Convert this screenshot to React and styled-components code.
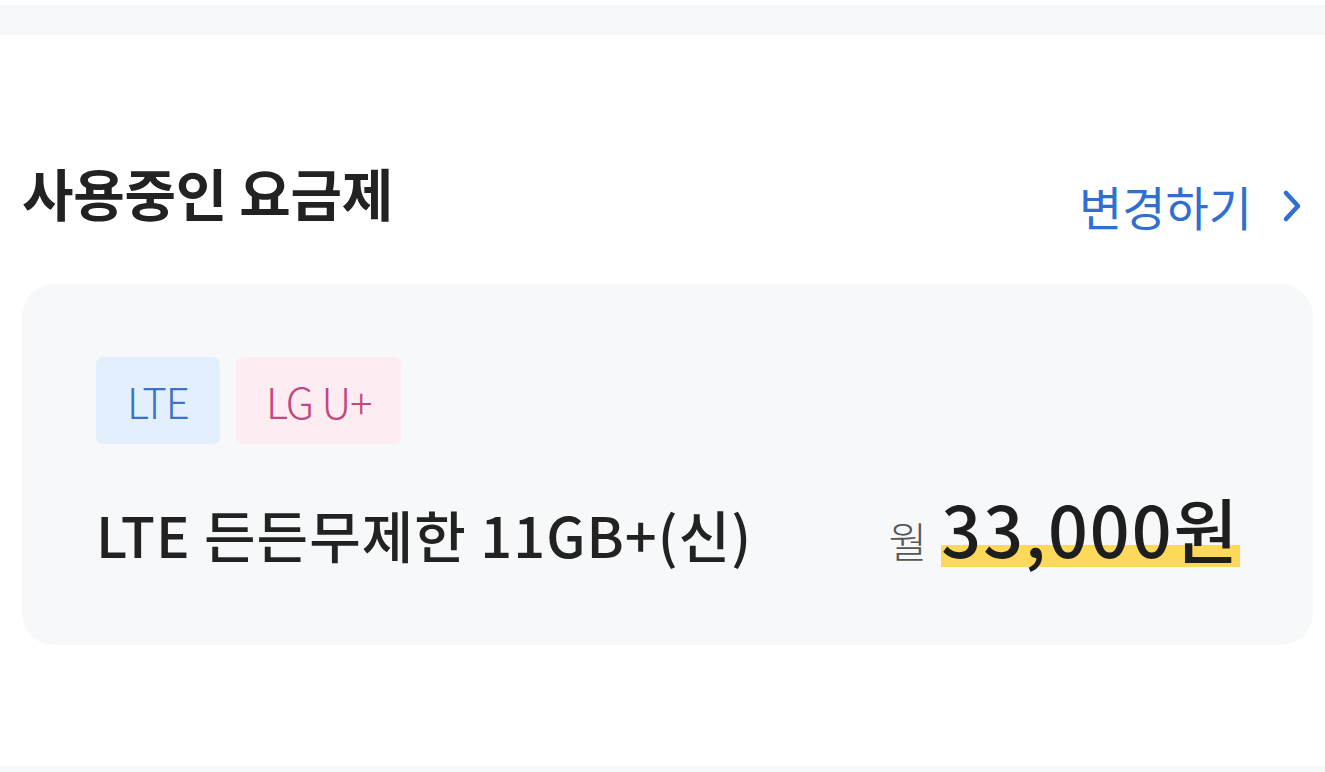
import React from 'react'
import styled, { createGlobalStyle } from 'styled-components'

const GlobalStyle = createGlobalStyle`
  html, body {
    margin: 0;
    padding: 0;
    background: #ffffff;
    font-family: "Noto Sans CJK KR", "Noto Sans", sans-serif;
  }
`;

const Band = styled.div`
  height: 30px;
  margin-top: ${p => p.$top || 0}px;
  background: #f7f8fa;
`;

const Section = styled.section`
  padding: 123px 12px 121px 22px;
`;

const Header = styled.div`
  display: flex;
  justify-content: space-between;
  align-items: flex-start;
`;

const Title = styled.h2`
  margin: 0;
  font-size: 56px;
  line-height: 1.2;
  font-weight: 600;
  color: #222222;
  letter-spacing: -0.3px;
`;

const ChangeLink = styled.a`
  display: flex;
  align-items: center;
  gap: 30px;
  margin-top: 20px;
  margin-right: 11px;
  font-size: 47px;
  line-height: 1.2;
  font-weight: 400;
  color: #2f6fd0;
  text-decoration: none;
`;

const Card = styled.div`
  margin-top: 50px;
  background: #f7f8fa;
  border-radius: 32px;
  padding: 73px 73px 71px 74px;
`;

const Tags = styled.div`
  display: flex;
  gap: 16px;
`;

const Tag = styled.span`
  display: inline-flex;
  align-items: center;
  height: 87px;
  padding: 0 ${p => p.$pad}px;
  border-radius: 7px;
  font-size: 42px;
  font-weight: 300;
  letter-spacing: -1px;
  color: ${p => p.$color};
  background: ${p => p.$bg};
`;

const PlanRow = styled.div`
  display: flex;
  justify-content: space-between;
  align-items: baseline;
  margin-top: 42px;
`;

const PlanName = styled.div`
  font-size: 56px;
  font-weight: 500;
  color: #222222;
  letter-spacing: 1px;
`;

const Price = styled.div`
  display: flex;
  align-items: baseline;
  gap: 14px;
`;

const Month = styled.span`
  font-size: 42px;
  font-weight: 300;
  color: #555555;
`;

const Amount = styled.span`
  font-size: 70px;
  line-height: 1.2;
  font-weight: 500;
  color: #1e1e1e;
  letter-spacing: 2px;
  background: linear-gradient(to bottom, transparent 70%, #fcd95a 70%, #fcd95a 96%, transparent 96%);
`;

export default function App() {
  return (
    <>
      <GlobalStyle />
      <Band $top={5} />
      <Section>
        <Header>
          <Title>사용중인 요금제</Title>
          <ChangeLink href="#">
            변경하기
            <svg width="20" height="34" viewBox="0 0 20 34">
              <polyline points="4,4 16,17 4,30" fill="none" stroke="#2f6fd0" strokeWidth="4.5" strokeLinecap="round" strokeLinejoin="round" />
            </svg>
          </ChangeLink>
        </Header>
        <Card>
          <Tags>
            <Tag $bg="#e4effd" $color="#3d72c4" $pad={31}>LTE</Tag>
            <Tag $bg="#fdecf2" $color="#c4477d" $pad={30}>LG U+</Tag>
          </Tags>
          <PlanRow>
            <PlanName>LTE 든든무제한 11GB+(신)</PlanName>
            <Price>
              <Month>월</Month>
              <Amount>33,000원</Amount>
            </Price>
          </PlanRow>
        </Card>
      </Section>
      <Band />
    </>
  )
}
